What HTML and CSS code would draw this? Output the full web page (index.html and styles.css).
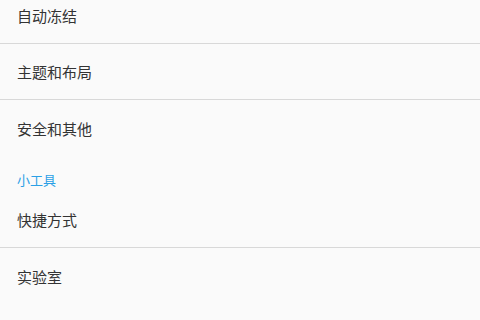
FILE: index.html
```html
<!DOCTYPE html>
<html lang="zh-CN">
<head>
    <meta charset="UTF-8">
    <meta name="viewport" content="width=device-width, initial-scale=1.0">
    <title>设置</title>
    <link rel="stylesheet" href="styles.css">
</head>
<body>
    <div class="settings">
        <div class="pref-item">自动冻结</div>
        <div class="pref-item">主题和布局</div>
        <div class="pref-item last">安全和其他</div>

        <div class="pref-category">小工具</div>
        <div class="pref-item">快捷方式</div>
        <div class="pref-item last">实验室</div>
    </div>
</body>
</html>
```

FILE: styles.css
```css
:root {
    --text-color: #333;
    --accent-color: #2aa0e6;
    --divider-color: #d8d8d8;
    --background-color: #fafafa;
}

html, body {
    margin: 0;
    padding: 0;
    height: 100%;
    overflow: hidden;
    background-color: var(--background-color);
    font-family: "Noto Sans CJK SC", "Noto Sans", sans-serif;
}

/* list is scrolled a little, first row is cut off */
.settings {
    margin-top: -12px;
}

.pref-item {
    height: 55px;
    padding: 0 17px;
    display: flex;
    align-items: center;
    font-size: 15px;
    color: var(--text-color);
    border-bottom: 1px solid var(--divider-color);
}

.pref-item.last {
    border-bottom: none;
    height: 56px;
}

.pref-category {
    height: 36px;
    padding: 0 17px 3px;
    display: flex;
    align-items: flex-end;
    box-sizing: border-box;
    font-size: 13px;
    color: var(--accent-color);
}
```
